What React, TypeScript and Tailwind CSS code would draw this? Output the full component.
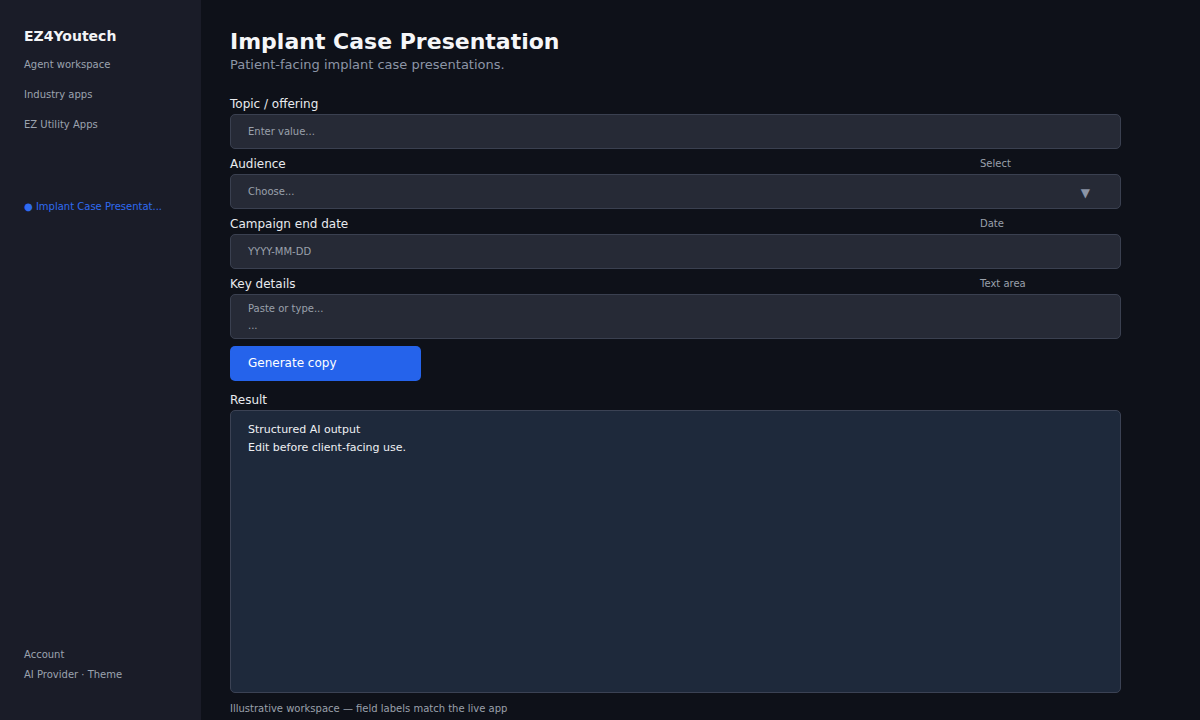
import React from 'react';

const font = { fontFamily: '"DejaVu Sans", "Liberation Sans", sans-serif' };

function Field({
  label,
  tag,
  children,
}: {
  label: string;
  tag?: string;
  children: React.ReactNode;
}) {
  return (
    <div className="mb-[8px]">
      <div className="flex items-end justify-between h-[14px] mb-[3px]">
        <span className="text-[12px] leading-[14px] text-[#e8eaee]">{label}</span>
        {tag && <span className="w-[141px] text-[10px] leading-[14px] text-[#9aa0ab]">{tag}</span>}
      </div>
      {children}
    </div>
  );
}

export default function App() {
  return (
    <div className="flex w-[1200px] h-[720px] overflow-hidden bg-[#0e1119]" style={font}>
      {/* Sidebar */}
      <aside className="w-[201px] shrink-0 bg-[#1a1c28] flex flex-col px-[24px] pt-[27px] pb-[38px]">
        <div className="text-[14px] leading-[18px] font-bold text-[#f3f4f6]">EZ4Youtech</div>
        <nav className="mt-[13px] flex flex-col gap-[16px] text-[10px] leading-[14px] text-[#9ca3af]">
          <span>Agent workspace</span>
          <span>Industry apps</span>
          <span>EZ Utility Apps</span>
        </nav>
        <div className="mt-[68px] text-[10px] leading-[14px] text-[#2f6bf0] whitespace-nowrap">● Implant Case Presentat...</div>
        <div className="mt-auto flex flex-col gap-[6px] text-[10px] leading-[14px] text-[#9ca3af]">
          <span>Account</span>
          <span>AI Provider · Theme</span>
        </div>
      </aside>

      {/* Main */}
      <main className="flex-1 pl-[29px] pt-[28px]">
        <div className="w-[891px]">
          <h1 className="text-[22px] leading-[28px] font-bold text-[#f5f6f8]">Implant Case Presentation</h1>
          <p className="text-[13px] leading-[18px] text-[#8c95a6]">Patient-facing implant case presentations.</p>

          <div className="mt-[23px]">
            <Field label="Topic / offering">
              <div className="h-[35px] rounded-[5px] border border-[#3a4050] bg-[#262a36] pl-[17px] flex items-center text-[10px] text-[#9aa0ab]">
                Enter value...
              </div>
            </Field>
            <Field label="Audience" tag="Select">
              <div className="h-[35px] rounded-[5px] border border-[#3a4050] bg-[#262a36] pl-[17px] pr-[30px] flex items-center justify-between text-[10px] text-[#9aa0ab]">
                <span>Choose...</span>
                <span className="text-[12px] text-[#8c95a6] translate-y-[1px]">▼</span>
              </div>
            </Field>
            <Field label="Campaign end date" tag="Date">
              <div className="h-[35px] rounded-[5px] border border-[#3a4050] bg-[#262a36] pl-[17px] flex items-center text-[10px] text-[#9aa0ab]">
                YYYY-MM-DD
              </div>
            </Field>
            <div className="-mb-[1px]">
              <Field label="Key details" tag="Text area">
                <div className="h-[45px] rounded-[5px] border border-[#3a4050] bg-[#262a36] pl-[17px] pt-[5px] text-[10px] leading-[17px] text-[#9aa0ab]">
                  <div>Paste or type...</div>
                  <div>...</div>
                </div>
              </Field>
            </div>
          </div>

          <button className="h-[35px] w-[191px] rounded-[5px] bg-[#2563eb] pl-[18px] pb-[2px] text-left text-[12px] text-white">
            Generate copy
          </button>

          <div className="mt-[12px]">
            <div className="text-[12px] leading-[14px] text-[#e8eaee] mb-[3px]">Result</div>
            <div className="h-[283px] rounded-[5px] border border-[#3b4254] bg-[#1e293b] pl-[17px] pt-[10px] text-[11px] leading-[18px] text-[#eef0f3]">
              <div>Structured AI output</div>
              <div>Edit before client-facing use.</div>
            </div>
          </div>

          <div className="mt-[9px] text-[10px] leading-[14px] text-[#9aa0ab]">
            Illustrative workspace — field labels match the live app
          </div>
        </div>
      </main>
    </div>
  );
}
